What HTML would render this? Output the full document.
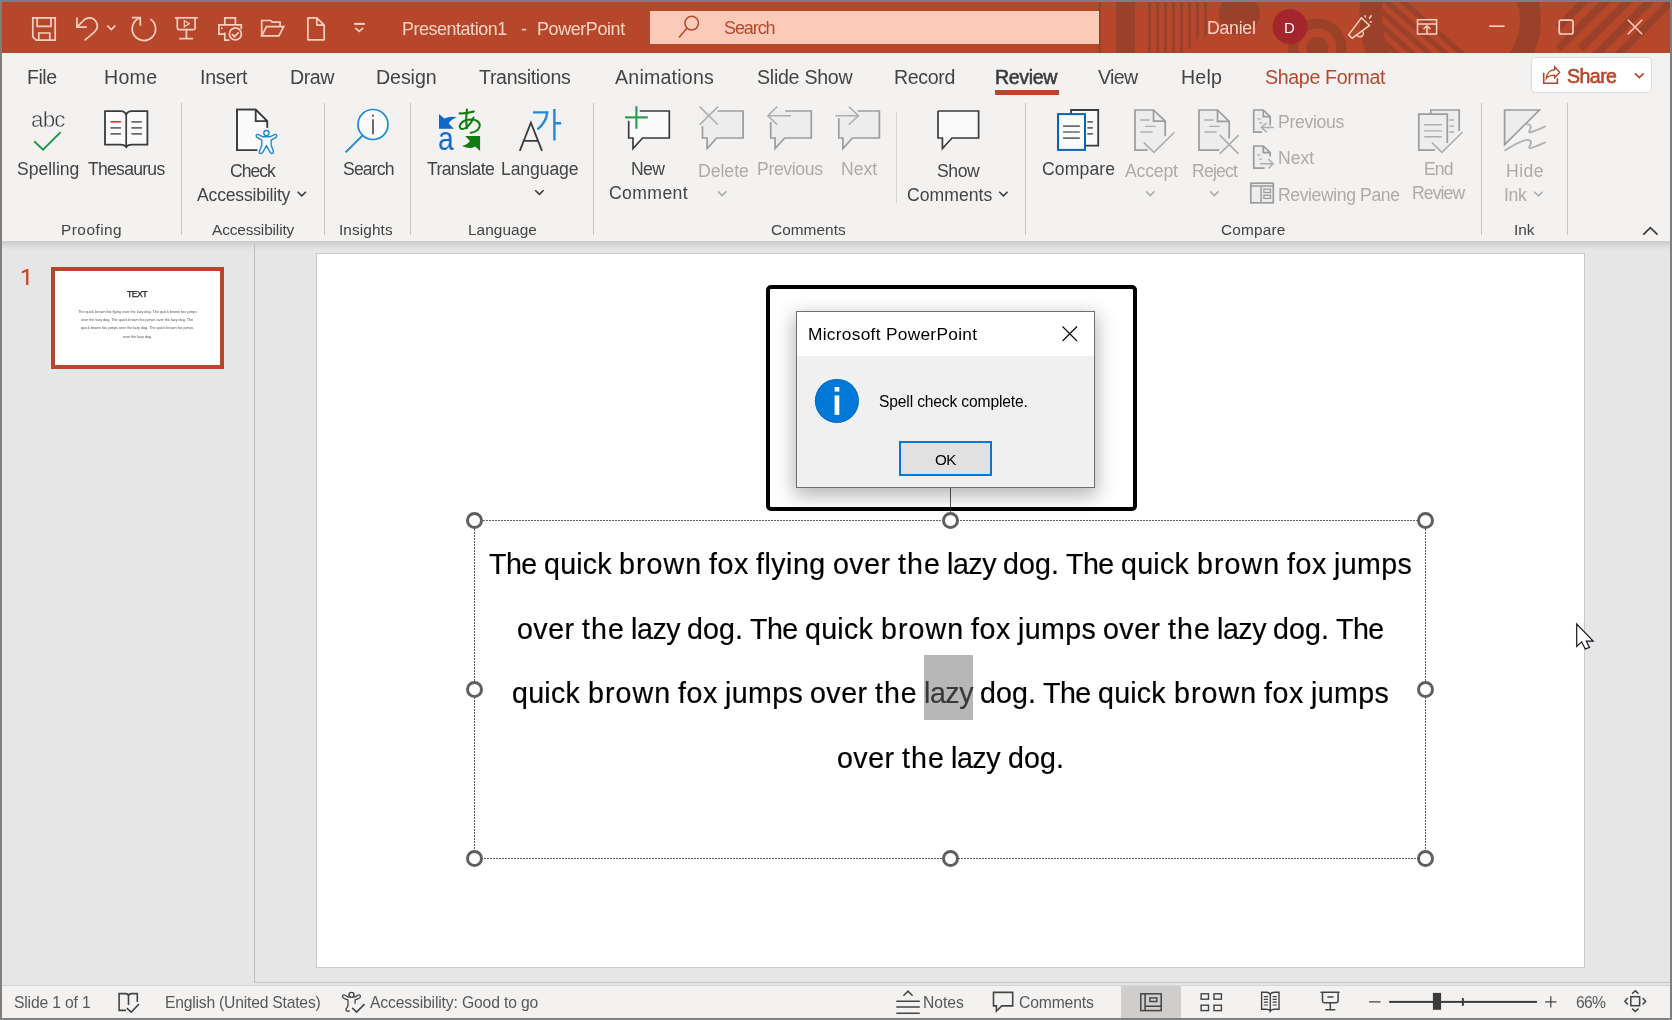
<!DOCTYPE html>
<html lang="en">
<head>
<meta charset="utf-8">
<title>Presentation1 - PowerPoint</title>
<style>
*{box-sizing:border-box;margin:0;padding:0}
html,body{width:1672px;height:1020px;overflow:hidden;background:#7f7f7f;font-family:"Liberation Sans",sans-serif;}
#app{position:absolute;left:0;top:0;width:1672px;height:1020px;overflow:hidden;background:#7f7f7f}
.abs{position:absolute}
#titlebar{position:absolute;left:2px;top:2px;width:1668px;height:51px;background:#b7472a}
#searchbox{position:absolute;left:650px;top:11px;width:449px;height:33px;background:#fccab8}
#tabs{position:absolute;left:2px;top:53px;width:1668px;height:48px;background:#f3f2f1}
#ribbon{position:absolute;left:2px;top:101px;width:1668px;height:140px;background:#f3f2f1}
#work{position:absolute;left:2px;top:241px;width:1668px;height:745px;background:#e6e6e6}
#workshadow{position:absolute;left:2px;top:241px;width:1668px;height:9px;background:linear-gradient(#cbcac9,#d3d3d3 30%,#dedede 65%,#e6e6e6)}
#panediv{position:absolute;left:254px;top:244px;width:1px;height:738px;background:#bcbcbc}
#slide{position:absolute;left:316px;top:253px;width:1269px;height:715px;background:#fff;border:1px solid #c9c9c9}
#thumb{position:absolute;left:51px;top:267px;width:173px;height:102px;background:#fff;border:4px solid #b7472a}
#statusline1{position:absolute;left:254px;top:982px;width:1416px;height:1px;background:#c6c6c6}
#statusline2{position:absolute;left:2px;top:985px;width:1668px;height:1px;background:#d6d6d6}
#status{position:absolute;left:2px;top:986px;width:1668px;height:32px;background:#f3f2f1}
#viewsel{position:absolute;left:1121px;top:986px;width:60px;height:32px;background:#d0cecc}
.sep{position:absolute;width:1px;background:#c8c6c4;top:103px;height:132px}
#sharebtn{position:absolute;left:1531px;top:57px;width:121px;height:36px;background:#fff;border:1px solid #dedcda;border-radius:4px}
#revline{position:absolute;left:995px;top:90px;width:64px;height:5px;background:#b7472a}
.t{position:absolute;white-space:pre;line-height:0;height:0;color:#444;will-change:transform}
svg.ov{position:absolute;left:0;top:0;width:1672px;height:1020px;overflow:visible;pointer-events:none}
#blackbox{position:absolute;left:766px;top:285px;width:371px;height:226px;border:4px solid #000;border-radius:5px}
#dialog{position:absolute;left:796px;top:311px;width:299px;height:177px;background:#f0f0f0;border:1px solid #6e6e6e;box-shadow:0 6px 18px 2px rgba(0,0,0,.29)}
#dlgtitle{position:absolute;left:0;top:0;width:297px;height:44px;background:#fff}
#okbtn{position:absolute;left:899px;top:441px;width:93px;height:35px;background:#e1e1e1;border:2px solid #0078d7}
#hl{position:absolute;left:924px;top:655px;width:49px;height:65px;background:#b7b7b7}
</style>
</head>
<body>
<div id="app">
<div id="titlebar"></div>
<svg class="ov" viewBox="0 0 1672 1020">
<defs><clipPath id="tbclip"><rect x="2" y="2" width="1668" height="51"/></clipPath>
<clipPath id="incirc"><circle cx="1487.5" cy="14" r="105.5"/></clipPath>
<clipPath id="cutdiag"><path d="M1100,2 H1227.8 L1185.3,53 H1100 Z"/></clipPath></defs>
<g clip-path="url(#tbclip)" fill="#9c4129">
<rect x="1098.5" y="2" width="2.5" height="51"/>
<rect x="1116" y="2" width="19" height="51"/>
<rect x="1148.1" y="2" width="2.9" height="51"/>
<rect x="1156.2" y="2" width="2.9" height="51"/>
<rect x="1164.1" y="2" width="2.9" height="51"/>
<rect x="1172" y="2" width="2.9" height="51"/>
<rect x="1180.1" y="2" width="2.9" height="51"/>
<path d="M1188,2 H1190.9 V46.9 L1188,49.8 Z"/>
<path d="M1196,2 H1198.9 V37.3 L1196,40.2 Z"/>
<path d="M1204,2 H1206.9 V35.1 L1204,38.9 Z"/>
<circle cx="1239.2" cy="14.4" r="20.6"/>
<circle cx="1317.4" cy="47.8" r="11"/>
<circle cx="1317.4" cy="47.8" r="24.2" fill="none" stroke="#9c4129" stroke-width="10"/>
<path d="M1487.5,-114 A128,128 0 0 0 1487.5,142 L1487.5,119.5 A105.5,105.5 0 0 1 1487.5,-91.5 Z"/>
<g clip-path="url(#incirc)">
<path d="M1399.3,2 L1407.4,2 L1465.2,53 L1457.1,53 Z"/>
<path d="M1383.0,2 L1391.1,2 L1448.9,53 L1440.8,53 Z"/>
<path d="M1366.7,2 L1374.8,2 L1432.6,53 L1424.5,53 Z"/>
<path d="M1350.4,2 L1358.5,2 L1416.3,53 L1408.2,53 Z"/>
<path d="M1334.1,2 L1342.2,2 L1400.0,53 L1391.9,53 Z"/>
<path d="M1317.8,2 L1325.9,2 L1383.7,53 L1375.6,53 Z"/>
</g>
<path d="M1463,-58 A78,78 0 0 1 1463,98 L1463,77 A57,57 0 0 0 1463,-37 Z"/>
<path d="M1577.9,2 L1588.5,2 L1560.8,29.7 L1555.5,24.4 Z"/>
<path d="M1599.8,2 L1610.4,2 L1561.1,51.3 L1555.8,46.0 Z"/>
<path d="M1621.7,2 L1632.3,2 L1583.0,51.3 L1577.7,46.0 Z"/>
<path d="M1643.6,2 L1654.2,2 L1603.2,53 L1592.6,53 Z"/>
<path d="M1665.5,2 L1676.1,2 L1625.1,53 L1614.5,53 Z"/>
</g>
<circle cx="1290" cy="26.6" r="17.5" fill="#a4262c"/>
<g fill="none" stroke="#fbcfbf" stroke-width="1.7" stroke-linejoin="miter">
<path d="M32.8,17.8 H55.2 V40.2 H36.2 L32.8,36.8 Z"/>
<path d="M37.2,17.8 V26.4 H51 V17.8"/>
<path d="M38.8,40.2 V33 H49.8 V40.2"/>
<path d="M76.9,17.6 V27.1 H86.8"/>
<path d="M77.2,26.8 L84.4,19.6 A8,8 0 1 1 94.3,32.2 L84.6,40.4"/>
<path d="M107.3,25.6 L111.3,29.6 L115.3,25.6"/>
<path d="M131.9,17.7 H140.3 V25.8"/>
<path d="M140.3,17.7 A11.7,11.7 0 1 0 150.4,19.1"/>
<path d="M175,17.8 H197.7"/>
<path d="M177.3,17.8 V28 Q177.3,29.6 178.9,29.6 H193.5 Q195.1,29.6 195.1,28 V17.8"/>
<path d="M186.4,29.6 V38.7 M179.3,38.7 H193"/>
<path d="M184.3,20.6 V26.8 L189.3,23.7 Z" stroke-width="1.2"/>
<path d="M224.8,24.6 V17.9 H235.4 V24.6"/>
<path d="M224.8,34.2 H218.9 V24.8 H241.3 V29"/>
<path d="M224.8,32.5 V40.1 H229.5"/>
<rect x="221" y="27.5" width="1.6" height="1.6" fill="#fbcfbf" stroke="none"/>
<circle cx="235.4" cy="33.9" r="6"/>
<path d="M232,34.2 L234.4,36.7 L238.7,32.4"/>
<path d="M261.7,35.8 V20.5 H270.6 L272.2,22.1 H280.1 V26.6"/>
<path d="M261.7,35.8 L266.5,26.7 H283.7 L278.9,35.8 Z"/>
<path d="M316.8,17.9 H307.9 V39.9 H324.2 V25.1 L316.8,17.9 V25.1 H324.2" stroke-linejoin="bevel"/>
<path d="M354.1,23.9 H364.9" stroke-width="2"/>
<path d="M355.3,27.8 L359.2,31.4 L363.2,27.8"/>
<path d="M1348.6,34.9 L1361.4,17.8 L1369.5,25.4 L1352.3,38.2 Z" stroke-width="1.5"/>
<path d="M1357,35.2 A3,3 0 0 0 1362.8,31.5" stroke-width="1.5"/>
<path d="M1364.8,15.2 L1365.7,17.6 M1369.1,18.7 L1371.6,15.3 M1369.7,21.6 L1371.8,22.3" stroke-width="1.5"/>
<rect x="1417.5" y="19.7" width="19.1" height="14.3" stroke-width="1.5"/>
<path d="M1417.5,23.9 H1436.6 M1427,26 V33.6 M1423.6,28.9 L1427,25.7 L1430.4,28.9" stroke-width="1.5"/>
<path d="M1489.2,26.2 H1504.5" stroke-width="1.6"/>
<rect x="1559.2" y="20.2" width="13.8" height="13.8" rx="2" stroke-width="1.7"/>
<path d="M1627.8,19.8 L1642.2,34.2 M1642.2,19.8 L1627.8,34.2" stroke-width="1.5"/>
</g>
</svg>
<div id="searchbox"></div>
<div id="tabs"></div>
<div id="revline"></div>
<div id="sharebtn"></div>
<div id="ribbon"></div>
<div class="sep" style="left:181px"></div>
<div class="sep" style="left:324px"></div>
<div class="sep" style="left:410px"></div>
<div class="sep" style="left:593px"></div>
<div class="sep" style="left:896px;top:112px;height:91px;background:#d8d6d4"></div>
<div class="sep" style="left:1025px"></div>
<div class="sep" style="left:1481px"></div>
<div class="sep" style="left:1567px"></div>

<div id="work"></div>
<div id="workshadow"></div>
<div id="panediv"></div>
<div id="thumb"></div>
<div id="slide"></div>
<div id="hl"></div>
<div id="statusline1"></div>
<div id="statusline2"></div>
<div id="status"></div>
<div id="viewsel"></div>
<svg class="ov" viewBox="0 0 1672 1020">
<g fill="none" stroke="#b7472a" stroke-width="1.5"><circle cx="691.7" cy="23.1" r="6.8"/><path d="M687.1,28.1 L679,37.4"/></g>
<g fill="none" stroke="#b7472a" stroke-width="1.4"><path d="M1543.7,72.7 V83.2 H1557.4 V78.2" stroke-width="1.6"/><path d="M1554.7,66.9 L1559.7,72.3 L1554.7,77.8 V75.1 C1550.5,75.1 1547.8,76.2 1546.3,78.4 C1546.6,73.6 1549.8,70 1554.7,69.8 Z" stroke-linejoin="miter"/></g>
<path d="M1635,73.3 L1639.3,77.6 L1643.6,73.3" fill="none" stroke="#b7472a" stroke-width="1.7"/>
<path d="M34.2,141.3 L43,149.7 L60.6,132.1" fill="none" stroke="#22994a" stroke-width="2"/>
<path d="M126.2,147 C125,144.9 122.5,144.6 120.5,144.6 H105 V111.1 H120.5 C123.5,111.1 125.6,112.6 126.2,115 C126.8,112.6 128.9,111.1 131.9,111.1 H147.4 V144.6 H131.9 C129.9,144.6 127.4,144.9 126.2,147 Z" fill="#fafafa" stroke="#3b3b3b" stroke-width="1.8"/>
<path d="M126.2,115 V147" stroke="#3b3b3b" stroke-width="1.7"/>
<g stroke="#6a6a6a" stroke-width="1.7" fill="none"><path d="M110.5,127.9 H120.9 M110.5,133.9 H120.9 M131.4,121.8 H141.9 M131.4,127.9 H141.9 M131.4,133.9 H141.9"/></g>
<path d="M110.5,121.8 H120.9" stroke="#e8303a" stroke-width="1.7"/>
<path d="M257.3,150.1 H237.1 V109.6 H255.7 L267.2,121.2 V127.7" fill="#fafafa" stroke="#3b3b3b" stroke-width="1.8"/>
<path d="M237.1,109.6 H255.7 L267.2,121.2 V150.1 H237.1 Z" fill="#fafafa" stroke="none"/>
<path d="M257.3,150.1 H237.1 V109.6 H255.7 L267.2,121.2 V127.7 M255.7,109.6 V121.2 H267.2" fill="none" stroke="#3b3b3b" stroke-width="1.8"/>
<path d="M257.8,134.4 L263.2,136.8 H269.7 L275.1,134.4 Q276.9,134.2 276.7,135.9 Q276.6,137.2 275.6,137.6 L271.1,140.1 V144.9 L273.4,151.4 Q273.8,153.2 272.4,153.4 Q270.9,153.6 270.2,152.4 L266.4,145.6 L262.7,152.4 Q262,153.6 260.5,153.4 Q259,153.2 259.4,151.4 L261.8,144.9 V140.1 L257.3,137.6 Q256.3,137.2 256.2,135.9 Q256,134.2 257.8,134.4 Z" fill="#fafafa" stroke="#1e8bd4" stroke-width="1.4" stroke-linejoin="round"/>
<circle cx="266.4" cy="133.1" r="2.6" fill="#fafafa" stroke="#1e8bd4" stroke-width="1.4"/>
<path d="M297.6,191.7 L301.8,195.9 L306,191.7" stroke="#3b3b3b" stroke-width="1.5" fill="none"/>
<path d="M345.6,152.4 L362.4,135.6" stroke="#1e8bd4" stroke-width="2" fill="none"/>
<circle cx="373" cy="124.5" r="15" fill="#fafafa" stroke="#1e8bd4" stroke-width="1.7"/>
<path d="M373,119.2 V134.2" stroke="#3b3b3b" stroke-width="1.5"/><rect x="372.2" y="114.7" width="1.6" height="1.9" fill="#3b3b3b"/>
<path d="M439,114.1 L444.3,118.5 Q450,115.6 456.9,117.2 Q450.6,119.4 448.7,123.5 L453.9,128.7 H439 Z" fill="#1068c8"/>
<path d="M465.2,136.1 H480.1 V150.9 L475.1,146.4 Q469,149.6 461.8,146.1 Q468,144.4 469.9,141 Z" fill="#107c10"/>
<g fill="none" stroke="#107c10" stroke-width="2.1" stroke-linecap="round"><path d="M459.6,113.4 C464,113.6 469,113 473.8,111.6"/><path d="M467,109.6 C466,115 465.8,122 466.8,128.2"/><path d="M473.6,117.6 C471,124 465,130.4 461.2,128.8 C457.8,127.2 460.4,121.2 467.8,119.8 C475.6,118.4 481,122 479.4,127 C478.2,130.4 474.4,132.2 470.8,132.8"/></g>
<path d="M519.8,150.9 L530.9,122.6 L542,150.9 M524.2,140.9 H537.8" fill="none" stroke="#3b3b3b" stroke-width="1.8"/>
<g fill="none" stroke="#1e8bd4" stroke-width="2.4"><path d="M533,112.4 H547.3 C546.5,119 543,125 537.4,129.4"/><path d="M554.4,109 V140.4 M554.4,123.3 H561.2"/></g>
<path d="M535.2,190.2 L539.4,194.4 L543.6,190.2" stroke="#3b3b3b" stroke-width="1.5" fill="none"/>
<path d="M628.7,111 H669.3 V138 H642.6 L633,148.5 V138 H628.7 Z" fill="#fafafa" stroke="none"/>
<path d="M639.7,111 H669.3 V138 H642.6 L633,148.5 V138 H628.7 V120.8" fill="none" stroke="#3b3b3b" stroke-width="1.7"/>
<path d="M625.1,117.3 H647.8 M636.4,106.2 V128.8" stroke="#2e9e55" stroke-width="2.2" fill="none"/>
<path d="M702.5,111 H743.1 V138 H716.7 L707.1,148.5 V138 H702.5 Z" fill="#ededed" stroke="none"/>
<path d="M717.6,111 H743.1 V138 H716.7 L707.1,148.5 V138 H702.5 V126.3" fill="none" stroke="#9c9c9c" stroke-width="1.7"/>
<path d="M699.6,106.6 L718,124.8 M718,106.6 L699.6,124.8" stroke="#adadad" stroke-width="1.5" fill="none"/>
<path d="M718,191.4 L722.2,195.6 L726.4,191.4" stroke="#adadad" stroke-width="1.5" fill="none"/>
<path d="M770.7,111 H811.3 V138 H784.7 L775.1,148.5 V138 H770.7 Z" fill="#ededed" stroke="none"/>
<path d="M785.2,111 H811.3 V138 H784.7 L775.1,148.5 V138 H770.7 V122.1" fill="none" stroke="#9c9c9c" stroke-width="1.7"/>
<path d="M767.8,115.7 H791 M777.2,106.6 L767.8,115.7 L777.2,124.8" stroke="#adadad" stroke-width="1.5" fill="none"/>
<path d="M838.8,111 H879.4 V138 H852.5 L842.9,148.5 V138 H838.8 Z" fill="#ededed" stroke="none"/>
<path d="M857.6,111 H879.4 V138 H852.5 L842.9,148.5 V138 H838.8 V118.3" fill="none" stroke="#9c9c9c" stroke-width="1.7"/>
<path d="M835.2,115.7 H858.5 M848.8,106.6 L858.5,115.7 L848.8,124.8" stroke="#adadad" stroke-width="1.5" fill="none"/>
<path d="M938,111 H978.6 V138 H952.0 L942.4,148.5 V138 H938 Z" fill="#fafafa" stroke="none"/>
<path d="M938,111 H978.6 V138 H952.0 L942.4,148.5 V138 H938 V111" fill="none" stroke="#3b3b3b" stroke-width="1.7"/>
<path d="M999.2,191.7 L1003.4,195.9 L1007.6,191.7" stroke="#3b3b3b" stroke-width="1.5" fill="none"/>
<path d="M1071.1,110 H1098.2 V145.6 H1071.1 Z" fill="#fafafa" stroke="#3b3b3b" stroke-width="1.8"/>
<path d="M1087.3,121.8 H1092.9 M1087.3,127.8 H1092.9 M1087.3,133.8 H1092.9" stroke="#6a6a6a" stroke-width="1.7"/>
<rect x="1058" y="114.1" width="27" height="35.8" fill="#fafafa" stroke="#0b63b5" stroke-width="2"/>
<path d="M1063,126.1 H1079.8 M1063,132 H1079.8 M1063,138.2 H1079.8" stroke="#6a6a6a" stroke-width="1.7"/>
<path d="M1135,110 H1153.5 L1165.2,121.1 V150.2 H1135 Z" fill="#ededed" stroke="none"/>
<path d="M1147.6,150.2 H1135 V110 H1153.5 L1165.2,121.1 V136.3 M1153.5,110 V121.1 H1165.2" fill="none" stroke="#9c9c9c" stroke-width="1.7"/>
<path d="M1140.3,120 H1149.7 M1145.1,126.3 H1155.7 M1140.3,132 H1152.6" stroke="#adadad" stroke-width="1.3"/>
<path d="M1143.8,142.6 L1153.9,152.3 L1174.4,132.2" fill="none" stroke="#adadad" stroke-width="1.6"/>
<path d="M1146,191.4 L1150.2,195.6 L1154.4,191.4" stroke="#adadad" stroke-width="1.5" fill="none"/>
<path d="M1199,110 H1217.5 L1229.2,121.4 V150.2 H1199 Z" fill="#ededed" stroke="none"/>
<path d="M1219.3,150.2 H1199 V110 H1217.5 L1229.2,121.4 V138.4 M1217.5,110 V121.4 H1229.2" fill="none" stroke="#9c9c9c" stroke-width="1.7"/>
<path d="M1204.4,120 H1213.7 M1209.3,126.3 H1219.7 M1204.4,132 H1216.6" stroke="#adadad" stroke-width="1.3"/>
<path d="M1219.7,135.1 L1238.6,153.9 M1238.6,135.1 L1219.7,153.9" fill="none" stroke="#adadad" stroke-width="1.6"/>
<path d="M1210.1,191.4 L1214.3,195.6 L1218.5,191.4" stroke="#adadad" stroke-width="1.5" fill="none"/>
<path d="M1253.7,110 H1263.3 L1270.2,116.7 V132.2 H1253.7 Z" fill="#ededed" stroke="none"/>
<path d="M1262,132.2 H1253.7 V110 H1263.3 L1270.2,116.7 V125.5 M1263.3,110 V116.7 H1270.2" fill="none" stroke="#9c9c9c" stroke-width="1.7"/>
<path d="M1257.4,118.8 H1260.8 M1259.1,122.9 H1262" stroke="#adadad" stroke-width="1.3"/>
<path d="M1261.4,127.5 H1273.8 M1266.6,122.9 L1261.4,127.5 L1266.6,132.3" fill="none" stroke="#adadad" stroke-width="1.5"/>
<path d="M1253.7,146 H1263.3 L1270.2,152.7 V168.1 H1253.7 Z" fill="#ededed" stroke="none"/>
<path d="M1264.7,168.1 H1253.7 V146 H1263.3 L1270.2,152.7 V156.5 M1263.3,146 V152.7 H1270.2" fill="none" stroke="#9c9c9c" stroke-width="1.7"/>
<path d="M1257.2,154.8 H1260.2 M1259.2,159.2 H1262" stroke="#adadad" stroke-width="1.3"/>
<path d="M1260.2,163.7 H1273.1 M1268.5,158.9 L1273.1,163.7 L1268.5,168.5" fill="none" stroke="#adadad" stroke-width="1.5"/>
<rect x="1250.8" y="183.2" width="22.5" height="19.6" fill="#ededed" stroke="#9c9c9c" stroke-width="1.7"/>
<path d="M1250.8,186 H1273.3 M1261.1,186 V202.8" stroke="#9c9c9c" stroke-width="1.5" fill="none"/>
<rect x="1263.9" y="189.1" width="6.6" height="3.4" fill="none" stroke="#9c9c9c" stroke-width="1.3"/><rect x="1263.9" y="195.2" width="6.6" height="3.2" fill="none" stroke="#9c9c9c" stroke-width="1.3"/>
<path d="M1430.8,110 H1459.2 V131 L1447.3,143 V114 H1430.8 Z" fill="#ededed" stroke="none"/>
<path d="M1430.8,114 V110 H1459.2 V130.9" fill="none" stroke="#9c9c9c" stroke-width="1.7"/>
<path d="M1449.4,120 H1454 M1449.4,126.1 H1454 M1449.4,132 H1454" stroke="#adadad" stroke-width="1.4"/>
<path d="M1418.8,114.1 H1447.3 V150.2 H1418.8 Z" fill="#ededed" stroke="none"/>
<path d="M1435.1,150.2 H1418.8 V114.1 H1447.3 V143" fill="none" stroke="#9c9c9c" stroke-width="1.7"/>
<path d="M1424.1,124.8 H1442 M1424.1,130.9 H1442 M1424.1,136.8 H1442" stroke="#adadad" stroke-width="1.4"/>
<path d="M1431.9,142.6 L1441.8,152.3 L1462.6,132" fill="none" stroke="#adadad" stroke-width="1.6"/>
<path d="M1504.6,110 H1539.4 L1504.6,144.7 Z" fill="#ededed" stroke="#9c9c9c" stroke-width="1.7"/>
<path d="M1526.4,124.2 C1530,124 1531.8,126.4 1530.4,128.8 C1528.6,131.8 1528.4,133 1531.4,132 C1536,130.4 1541,128.2 1545.7,126.2" fill="none" stroke="#b3b3b3" stroke-width="1.9"/>
<path d="M1504.6,150.6 C1512,146 1519,141.8 1525.6,140.2 C1530,139.2 1532,141.4 1530.4,144.4 C1528.6,147.6 1528.4,149 1532.3,147.7 C1537,146 1541,144.2 1545.7,142.2" fill="none" stroke="#b3b3b3" stroke-width="1.9"/>
<path d="M1534.2,191.7 L1538.4,195.9 L1542.6,191.7" stroke="#adadad" stroke-width="1.5" fill="none"/>
<path d="M1643.3,234.6 L1650.4,227.6 L1657.5,234.6" stroke="#3b3b3b" stroke-width="1.7" fill="none"/>
<g fill="none" stroke="#444444" stroke-width="1.6">
<path d="M126,1010.4 H119.1 V993.6 H125.6 C127.4,993.6 128.3,994.6 128.5,995.8 C128.7,994.6 129.6,993.6 131.4,993.6 H137.3 V1002 M128.5,995.8 V1004.9 M126.8,1008.2 L131.2,1012.2 L138.9,1004.1"/>
<circle cx="351.5" cy="994.9" r="2.5" stroke-width="1.4"/>
<path d="M348.8,997.4 L344.6,995 C343,994.4 342,996 342.8,997.3 C343.2,998 344,998.3 344.6,998.6 L348,1000 V1004.9 C348,1007.5 346,1008 345.9,1009.6 C345.9,1011.2 348,1011.8 349.7,1010.6" stroke-width="1.3"/>
<path d="M354.3,997.4 L358.3,995 C359.9,994.4 360.9,996 360.1,997.3 C359.7,998 358.9,998.3 358.3,998.6 L355.1,1000 V1003.7" stroke-width="1.3"/>
<path d="M352.2,1007.9 L356.6,1012.1 L364.5,1004.1" stroke-width="1.5"/>
<path d="M903.4,995.7 L908,991.1 L912.6,995.7 M896.3,1001.2 H919.8 M896.3,1007 H919.8 M896.3,1013.3 H919.8" stroke-width="1.5"/>
<path d="M993.5,992.4 H1012.7 V1005.9 H1001.8 L996.4,1011.2 V1005.9 H993.5 Z"/>
<rect x="1140.8" y="993.8" width="20.4" height="16.8" stroke-width="1.5"/><path d="M1145.1,993.8 V1010.6 M1145.1,1006.2 H1161.2" stroke-width="1.5"/><rect x="1149.9" y="997.9" width="7" height="3.6" stroke-width="1.4"/>
<rect x="1201.1" y="993.8" width="7.4" height="5.4" stroke-width="1.4"/>
<rect x="1201.1" y="1005.2" width="7.4" height="5.4" stroke-width="1.4"/>
<rect x="1214" y="993.8" width="7.4" height="5.4" stroke-width="1.4"/>
<rect x="1214" y="1005.2" width="7.4" height="5.4" stroke-width="1.4"/>
<path d="M1270.3,1011 C1269.4,1009.6 1267.6,1009.2 1266,1009.2 H1261.6 V992.3 H1266.4 C1268.4,992.3 1269.8,993.2 1270.3,994.6 C1270.8,993.2 1272.2,992.3 1274.2,992.3 H1279 V1009.2 H1274.6 C1273,1009.2 1271.2,1009.6 1270.3,1011 V994.6" stroke-width="1.4"/>
<path d="M1263.8,996.6 H1268 M1263.8,999.4 H1268 M1263.8,1002.2 H1268 M1263.8,1005 H1268 M1272.6,996.6 H1276.8 M1272.6,999.4 H1276.8 M1272.6,1002.2 H1276.8 M1272.6,1005 H1276.8" stroke-width="1.2"/>
<path d="M1320.5,992.3 H1339.6 M1322.5,992.3 V1001 Q1322.5,1002.7 1324.2,1002.7 H1336.4 Q1338.1,1002.7 1338.1,1001 V992.3 M1327.4,996.9 H1333.5 M1330.3,1002.7 V1009.8 M1325.3,1009.8 H1335.3" stroke-width="1.5"/>
<path d="M1369.1,1001.8 H1380.5 M1545.2,1001.8 H1556.4 M1550.8,996.2 V1007.4" stroke-width="1.2"/>
<rect x="1630.8" y="996.7" width="8.8" height="9" stroke-width="1.5"/>
<path d="M1632.1,993.6 L1635.3,990.7 L1638.5,993.6 M1632.1,1008.6 L1635.3,1011.5 L1638.5,1008.6 M1627.8,997.9 L1624.9,1001.2 L1627.8,1004.5 M1642.7,997.9 L1645.6,1001.2 L1642.7,1004.5" stroke-width="1.5"/>
</g>
<rect x="1389.2" y="1000.9" width="147.8" height="2" fill="#3b3b3b"/><rect x="1432.9" y="992.9" width="8.2" height="16.9" fill="#3b3b3b"/><rect x="1461.9" y="998.1" width="2" height="7.7" fill="#3b3b3b"/>
<path d="M28.4,268.9 V285 H26.1 V271.7 L21.9,273.4 V271.3 L26.7,268.9 Z" fill="#d04526"/>
<path d="M950.5,488 V513" stroke="#555" stroke-width="1" fill="none"/>
<rect x="474.5" y="520.5" width="951" height="338" fill="none" stroke="#5f5f5f" stroke-width="1" stroke-dasharray="2 1" stroke-dashoffset="0.5"/>
<circle cx="474.5" cy="520.5" r="7" fill="#fff" stroke="#5f5f5f" stroke-width="3"/>
<circle cx="950.5" cy="520.5" r="7" fill="#fff" stroke="#5f5f5f" stroke-width="3"/>
<circle cx="1425.5" cy="520.5" r="7" fill="#fff" stroke="#5f5f5f" stroke-width="3"/>
<circle cx="474.5" cy="689.5" r="7" fill="#fff" stroke="#5f5f5f" stroke-width="3"/>
<circle cx="1425.5" cy="689.5" r="7" fill="#fff" stroke="#5f5f5f" stroke-width="3"/>
<circle cx="474.5" cy="858.5" r="7" fill="#fff" stroke="#5f5f5f" stroke-width="3"/>
<circle cx="950.5" cy="858.5" r="7" fill="#fff" stroke="#5f5f5f" stroke-width="3"/>
<circle cx="1425.5" cy="858.5" r="7" fill="#fff" stroke="#5f5f5f" stroke-width="3"/>
</svg>
<div class="t" style="left:402.00px;top:28.90px;font-size:17.9px;letter-spacing:-0.438px;color:#fbd3c4;">Presentation1</div>
<div class="t" style="left:521.00px;top:28.90px;font-size:17.9px;color:#fbd3c4;">-</div>
<div class="t" style="left:536.80px;top:28.90px;font-size:17.9px;letter-spacing:-0.369px;color:#fbd3c4;">PowerPoint</div>
<div class="t" style="left:723.60px;top:27.90px;font-size:18px;letter-spacing:-1.084px;color:#b34a2e;">Search</div>
<div class="t" style="left:1207.40px;top:27.90px;font-size:17.7px;letter-spacing:-0.263px;color:#fbd3c4;">Daniel</div>
<div class="t" style="left:1284.00px;top:27.80px;font-size:15px;color:#ffffff;">D</div>
<div class="t" style="left:26.80px;top:76.90px;font-size:19.6px;letter-spacing:-0.492px;">File</div>
<div class="t" style="left:103.80px;top:76.90px;font-size:19.6px;letter-spacing:0.277px;">Home</div>
<div class="t" style="left:199.50px;top:76.90px;font-size:19.6px;letter-spacing:-0.312px;">Insert</div>
<div class="t" style="left:289.80px;top:76.90px;font-size:19.6px;letter-spacing:-0.457px;">Draw</div>
<div class="t" style="left:375.80px;top:76.90px;font-size:19.6px;letter-spacing:-0.079px;">Design</div>
<div class="t" style="left:479.00px;top:76.90px;font-size:19.6px;letter-spacing:-0.330px;">Transitions</div>
<div class="t" style="left:615.00px;top:76.90px;font-size:19.6px;letter-spacing:0.208px;">Animations</div>
<div class="t" style="left:757.00px;top:76.90px;font-size:19.6px;letter-spacing:-0.264px;">Slide Show</div>
<div class="t" style="left:894.00px;top:76.90px;font-size:19.6px;letter-spacing:-0.353px;">Record</div>
<div class="t" style="left:994.70px;top:76.90px;font-size:19.6px;letter-spacing:-0.359px;color:#3b3b3b;-webkit-text-stroke:0.55px #3b3b3b;">Review</div>
<div class="t" style="left:1098.00px;top:76.90px;font-size:19.6px;letter-spacing:-0.655px;">View</div>
<div class="t" style="left:1180.50px;top:76.90px;font-size:19.6px;letter-spacing:0.200px;">Help</div>
<div class="t" style="left:1264.50px;top:76.90px;font-size:19.6px;letter-spacing:-0.337px;color:#b7472a;">Shape Format</div>
<div class="t" style="left:1567.40px;top:76.10px;font-size:19.6px;letter-spacing:-0.572px;color:#b7472a;-webkit-text-stroke:0.6px #b7472a;">Share</div>
<div class="t" style="left:17.40px;top:169.40px;font-size:17.6px;letter-spacing:-0.031px;">Spelling</div>
<div class="t" style="left:88.00px;top:169.40px;font-size:17.6px;letter-spacing:-0.741px;">Thesaurus</div>
<div class="t" style="left:230.20px;top:170.80px;font-size:17.6px;letter-spacing:-0.993px;">Check</div>
<div class="t" style="left:197.40px;top:194.50px;font-size:17.6px;letter-spacing:-0.201px;">Accessibility</div>
<div class="t" style="left:342.50px;top:169.40px;font-size:17.6px;letter-spacing:-0.832px;">Search</div>
<div class="t" style="left:426.90px;top:169.40px;font-size:17.6px;letter-spacing:-0.625px;">Translate</div>
<div class="t" style="left:501.20px;top:169.40px;font-size:17.6px;letter-spacing:-0.099px;">Language</div>
<div class="t" style="left:631.20px;top:169.40px;font-size:17.6px;letter-spacing:-0.645px;">New</div>
<div class="t" style="left:609.40px;top:193.20px;font-size:17.6px;letter-spacing:0.405px;">Comment</div>
<div class="t" style="left:698.00px;top:170.80px;font-size:17.6px;letter-spacing:-0.014px;color:#aeaaa8;">Delete</div>
<div class="t" style="left:756.80px;top:169.40px;font-size:17.6px;letter-spacing:-0.351px;color:#aeaaa8;">Previous</div>
<div class="t" style="left:840.80px;top:169.40px;font-size:17.6px;letter-spacing:-0.029px;color:#aeaaa8;">Next</div>
<div class="t" style="left:936.50px;top:170.80px;font-size:17.6px;letter-spacing:-0.402px;">Show</div>
<div class="t" style="left:906.60px;top:194.50px;font-size:17.6px;letter-spacing:0.020px;">Comments</div>
<div class="t" style="left:1041.50px;top:169.40px;font-size:17.6px;letter-spacing:0.121px;">Compare</div>
<div class="t" style="left:1124.70px;top:170.80px;font-size:17.6px;letter-spacing:-0.160px;color:#aeaaa8;">Accept</div>
<div class="t" style="left:1191.90px;top:170.80px;font-size:17.6px;letter-spacing:-0.776px;color:#aeaaa8;">Reject</div>
<div class="t" style="left:1277.70px;top:122.40px;font-size:17.6px;letter-spacing:-0.308px;color:#aeaaa8;">Previous</div>
<div class="t" style="left:1277.70px;top:158.20px;font-size:17.6px;color:#aeaaa8;">Next</div>
<div class="t" style="left:1277.70px;top:194.50px;font-size:17.6px;letter-spacing:-0.397px;color:#aeaaa8;">Reviewing Pane</div>
<div class="t" style="left:1424.00px;top:169.40px;font-size:17.6px;letter-spacing:-0.910px;color:#aeaaa8;">End</div>
<div class="t" style="left:1412.30px;top:193.20px;font-size:17.6px;letter-spacing:-0.916px;color:#aeaaa8;">Review</div>
<div class="t" style="left:1506.00px;top:170.80px;font-size:17.6px;letter-spacing:0.467px;color:#aeaaa8;">Hide</div>
<div class="t" style="left:1503.80px;top:194.50px;font-size:17.6px;letter-spacing:-0.386px;color:#aeaaa8;">Ink</div>
<div class="t" style="left:60.50px;top:229.60px;font-size:15.4px;letter-spacing:0.476px;">Proofing</div>
<div class="t" style="left:211.70px;top:229.60px;font-size:15.4px;letter-spacing:-0.127px;">Accessibility</div>
<div class="t" style="left:339.40px;top:229.60px;font-size:15.4px;letter-spacing:0.079px;">Insights</div>
<div class="t" style="left:467.70px;top:229.60px;font-size:15.4px;letter-spacing:0.055px;">Language</div>
<div class="t" style="left:771.20px;top:229.60px;font-size:15.4px;letter-spacing:0.041px;">Comments</div>
<div class="t" style="left:1221.30px;top:229.60px;font-size:15.4px;letter-spacing:0.160px;">Compare</div>
<div class="t" style="left:1513.70px;top:229.60px;font-size:15.4px;letter-spacing:-0.068px;">Ink</div>
<div class="t" style="left:30.90px;top:119.60px;font-size:22.4px;letter-spacing:-0.803px;color:#3b3b3b;-webkit-text-stroke:0.45px #f3f2f1;">abc</div>
<div class="t" style="left:438.30px;top:139.40px;font-size:32.5px;color:#1068c8;transform:scaleX(0.87);transform-origin:0 0;">a</div>
<div class="t" style="left:127.40px;top:294.20px;font-size:8.8px;letter-spacing:-0.636px;color:#1a1a1a;-webkit-text-stroke:0.25px #1a1a1a;">TEXT</div>
<div class="t" style="left:78.00px;top:311.90px;font-size:3.9px;letter-spacing:-0.070px;color:#5a5a5a;">The quick brown fox flying over the lazy dog. The quick brown fox jumps</div>
<div class="t" style="left:81.30px;top:319.90px;font-size:3.9px;letter-spacing:-0.080px;color:#5a5a5a;">over the lazy dog. The quick brown fox jumps over the lazy dog. The</div>
<div class="t" style="left:81.30px;top:327.80px;font-size:3.9px;letter-spacing:-0.077px;color:#5a5a5a;">quick brown fox jumps over the lazy dog. The quick brown fox jumps</div>
<div class="t" style="left:122.80px;top:336.80px;font-size:3.9px;letter-spacing:-0.102px;color:#5a5a5a;">over the lazy dog.</div>
<div class="t" style="left:488.60px;top:564.00px;font-size:28.6px;letter-spacing:-0.590px;color:#000000;-webkit-text-stroke:0.2px currentColor;">The</div>
<div class="t" style="left:543.71px;top:564.00px;font-size:28.6px;letter-spacing:0.230px;color:#000000;-webkit-text-stroke:0.2px currentColor;">quick</div>
<div class="t" style="left:619.23px;top:564.00px;font-size:28.6px;letter-spacing:1.064px;color:#000000;-webkit-text-stroke:0.2px currentColor;">brown</div>
<div class="t" style="left:709.28px;top:564.00px;font-size:28.6px;letter-spacing:0.552px;color:#000000;-webkit-text-stroke:0.2px currentColor;">fox</div>
<div class="t" style="left:756.25px;top:564.00px;font-size:28.6px;letter-spacing:0.491px;color:#000000;-webkit-text-stroke:0.2px currentColor;">flying</div>
<div class="t" style="left:833.03px;top:564.00px;font-size:28.6px;letter-spacing:0.469px;color:#000000;-webkit-text-stroke:0.2px currentColor;">over</div>
<div class="t" style="left:897.91px;top:564.00px;font-size:28.6px;letter-spacing:1.017px;color:#000000;-webkit-text-stroke:0.2px currentColor;">the</div>
<div class="t" style="left:947.07px;top:564.00px;font-size:28.6px;letter-spacing:-0.462px;color:#000000;-webkit-text-stroke:0.2px currentColor;">lazy</div>
<div class="t" style="left:1003.44px;top:564.00px;font-size:28.6px;letter-spacing:0.087px;color:#000000;-webkit-text-stroke:0.2px currentColor;">dog.</div>
<div class="t" style="left:1066.22px;top:564.00px;font-size:28.6px;letter-spacing:-0.557px;color:#000000;-webkit-text-stroke:0.2px currentColor;">The</div>
<div class="t" style="left:1121.32px;top:564.00px;font-size:28.6px;letter-spacing:0.250px;color:#000000;-webkit-text-stroke:0.2px currentColor;">quick</div>
<div class="t" style="left:1196.83px;top:564.00px;font-size:28.6px;letter-spacing:1.064px;color:#000000;-webkit-text-stroke:0.2px currentColor;">brown</div>
<div class="t" style="left:1286.89px;top:564.00px;font-size:28.6px;letter-spacing:0.585px;color:#000000;-webkit-text-stroke:0.2px currentColor;">fox</div>
<div class="t" style="left:1333.78px;top:564.00px;font-size:28.6px;letter-spacing:0.365px;color:#000000;-webkit-text-stroke:0.2px currentColor;">jumps</div>
<div class="t" style="left:516.83px;top:628.60px;font-size:28.6px;letter-spacing:0.469px;color:#000000;-webkit-text-stroke:0.2px currentColor;">over</div>
<div class="t" style="left:581.71px;top:628.60px;font-size:28.6px;letter-spacing:1.017px;color:#000000;-webkit-text-stroke:0.2px currentColor;">the</div>
<div class="t" style="left:630.88px;top:628.60px;font-size:28.6px;letter-spacing:-0.437px;color:#000000;-webkit-text-stroke:0.2px currentColor;">lazy</div>
<div class="t" style="left:687.33px;top:628.60px;font-size:28.6px;letter-spacing:0.062px;color:#000000;-webkit-text-stroke:0.2px currentColor;">dog.</div>
<div class="t" style="left:750.02px;top:628.60px;font-size:28.6px;letter-spacing:-0.557px;color:#000000;-webkit-text-stroke:0.2px currentColor;">The</div>
<div class="t" style="left:805.12px;top:628.60px;font-size:28.6px;letter-spacing:0.250px;color:#000000;-webkit-text-stroke:0.2px currentColor;">quick</div>
<div class="t" style="left:880.63px;top:628.60px;font-size:28.6px;letter-spacing:1.064px;color:#000000;-webkit-text-stroke:0.2px currentColor;">brown</div>
<div class="t" style="left:970.78px;top:628.60px;font-size:28.6px;letter-spacing:0.552px;color:#000000;-webkit-text-stroke:0.2px currentColor;">fox</div>
<div class="t" style="left:1017.59px;top:628.60px;font-size:28.6px;letter-spacing:0.385px;color:#000000;-webkit-text-stroke:0.2px currentColor;">jumps</div>
<div class="t" style="left:1102.93px;top:628.60px;font-size:28.6px;letter-spacing:0.469px;color:#000000;-webkit-text-stroke:0.2px currentColor;">over</div>
<div class="t" style="left:1167.81px;top:628.60px;font-size:28.6px;letter-spacing:1.017px;color:#000000;-webkit-text-stroke:0.2px currentColor;">the</div>
<div class="t" style="left:1216.97px;top:628.60px;font-size:28.6px;letter-spacing:-0.462px;color:#000000;-webkit-text-stroke:0.2px currentColor;">lazy</div>
<div class="t" style="left:1273.34px;top:628.60px;font-size:28.6px;letter-spacing:0.087px;color:#000000;-webkit-text-stroke:0.2px currentColor;">dog.</div>
<div class="t" style="left:1336.12px;top:628.60px;font-size:28.6px;letter-spacing:-0.557px;color:#000000;-webkit-text-stroke:0.2px currentColor;">The</div>
<div class="t" style="left:512.12px;top:693.30px;font-size:28.6px;letter-spacing:0.250px;color:#000000;-webkit-text-stroke:0.2px currentColor;">quick</div>
<div class="t" style="left:587.63px;top:693.30px;font-size:28.6px;letter-spacing:1.064px;color:#000000;-webkit-text-stroke:0.2px currentColor;">brown</div>
<div class="t" style="left:677.69px;top:693.30px;font-size:28.6px;letter-spacing:0.585px;color:#000000;-webkit-text-stroke:0.2px currentColor;">fox</div>
<div class="t" style="left:724.58px;top:693.30px;font-size:28.6px;letter-spacing:0.365px;color:#000000;-webkit-text-stroke:0.2px currentColor;">jumps</div>
<div class="t" style="left:809.93px;top:693.30px;font-size:28.6px;letter-spacing:0.469px;color:#000000;-webkit-text-stroke:0.2px currentColor;">over</div>
<div class="t" style="left:874.79px;top:693.30px;font-size:28.6px;letter-spacing:0.984px;color:#000000;-webkit-text-stroke:0.2px currentColor;">the</div>
<div class="t" style="left:923.97px;top:693.30px;font-size:28.6px;letter-spacing:-0.462px;color:#383838;-webkit-text-stroke:0.2px currentColor;">lazy</div>
<div class="t" style="left:980.33px;top:693.30px;font-size:28.6px;letter-spacing:0.062px;color:#000000;-webkit-text-stroke:0.2px currentColor;">dog.</div>
<div class="t" style="left:1043.10px;top:693.30px;font-size:28.6px;letter-spacing:-0.590px;color:#000000;-webkit-text-stroke:0.2px currentColor;">The</div>
<div class="t" style="left:1098.21px;top:693.30px;font-size:28.6px;letter-spacing:0.230px;color:#000000;-webkit-text-stroke:0.2px currentColor;">quick</div>
<div class="t" style="left:1173.73px;top:693.30px;font-size:28.6px;letter-spacing:1.064px;color:#000000;-webkit-text-stroke:0.2px currentColor;">brown</div>
<div class="t" style="left:1263.79px;top:693.30px;font-size:28.6px;letter-spacing:0.585px;color:#000000;-webkit-text-stroke:0.2px currentColor;">fox</div>
<div class="t" style="left:1310.68px;top:693.30px;font-size:28.6px;letter-spacing:0.365px;color:#000000;-webkit-text-stroke:0.2px currentColor;">jumps</div>
<div class="t" style="left:837.23px;top:757.80px;font-size:28.6px;letter-spacing:0.469px;color:#000000;-webkit-text-stroke:0.2px currentColor;">over</div>
<div class="t" style="left:902.11px;top:757.80px;font-size:28.6px;letter-spacing:1.017px;color:#000000;-webkit-text-stroke:0.2px currentColor;">the</div>
<div class="t" style="left:951.27px;top:757.80px;font-size:28.6px;letter-spacing:-0.462px;color:#000000;-webkit-text-stroke:0.2px currentColor;">lazy</div>
<div class="t" style="left:1007.73px;top:757.80px;font-size:28.6px;letter-spacing:0.062px;color:#000000;-webkit-text-stroke:0.2px currentColor;">dog.</div>
<div class="t" style="left:13.50px;top:1002.80px;font-size:15.7px;letter-spacing:-0.170px;color:#585858;">Slide 1 of 1</div>
<div class="t" style="left:165.00px;top:1002.80px;font-size:15.7px;letter-spacing:-0.214px;color:#585858;">English (United States)</div>
<div class="t" style="left:369.50px;top:1002.80px;font-size:15.7px;letter-spacing:-0.148px;color:#585858;">Accessibility: Good to go</div>
<div class="t" style="left:922.50px;top:1002.80px;font-size:15.7px;letter-spacing:-0.034px;color:#585858;">Notes</div>
<div class="t" style="left:1018.50px;top:1002.80px;font-size:15.7px;letter-spacing:-0.142px;color:#585858;">Comments</div>
<div class="t" style="left:1575.50px;top:1002.80px;font-size:15.7px;letter-spacing:-0.725px;color:#585858;">66%</div>
<div id="blackbox"></div>
<div id="dialog"><div id="dlgtitle"></div></div>
<div id="okbtn"></div>
<svg class="ov" viewBox="0 0 1672 1020">
<path d="M1062.5,326.5 L1077,341 M1077,326.5 L1062.5,341" stroke="#000" stroke-width="1.1" fill="none"/>
<circle cx="836.9" cy="400.9" r="22" fill="#0078d7"/>
<circle cx="836.9" cy="400.9" r="21.5" fill="none" stroke="#0a5fa8" stroke-width="1" opacity=".5"/>
<rect x="834.6" y="387" width="4.7" height="4.6" fill="#fff"/>
<rect x="834.6" y="395.4" width="4.7" height="19.5" fill="#fff"/>
</svg>

<div class="t" style="left:807.60px;top:334.40px;font-size:17.3px;letter-spacing:0.302px;color:#000000;">Microsoft PowerPoint</div>
<div class="t" style="left:878.50px;top:402.10px;font-size:15.6px;letter-spacing:-0.142px;color:#000000;">Spell check complete.</div>
<div class="t" style="left:935.00px;top:459.60px;font-size:15.2px;letter-spacing:-0.613px;color:#000000;">OK</div>
<svg class="ov" viewBox="0 0 1672 1020">
<path d="M1576.7,624 V646.3 L1581.7,641.9 L1585.3,649.1 L1589.5,647.4 L1586.3,641.2 H1593.2 Z" fill="#fff" stroke="#15151f" stroke-width="1.2" stroke-linejoin="miter"/>
</svg>

</div>
</body>
</html>
